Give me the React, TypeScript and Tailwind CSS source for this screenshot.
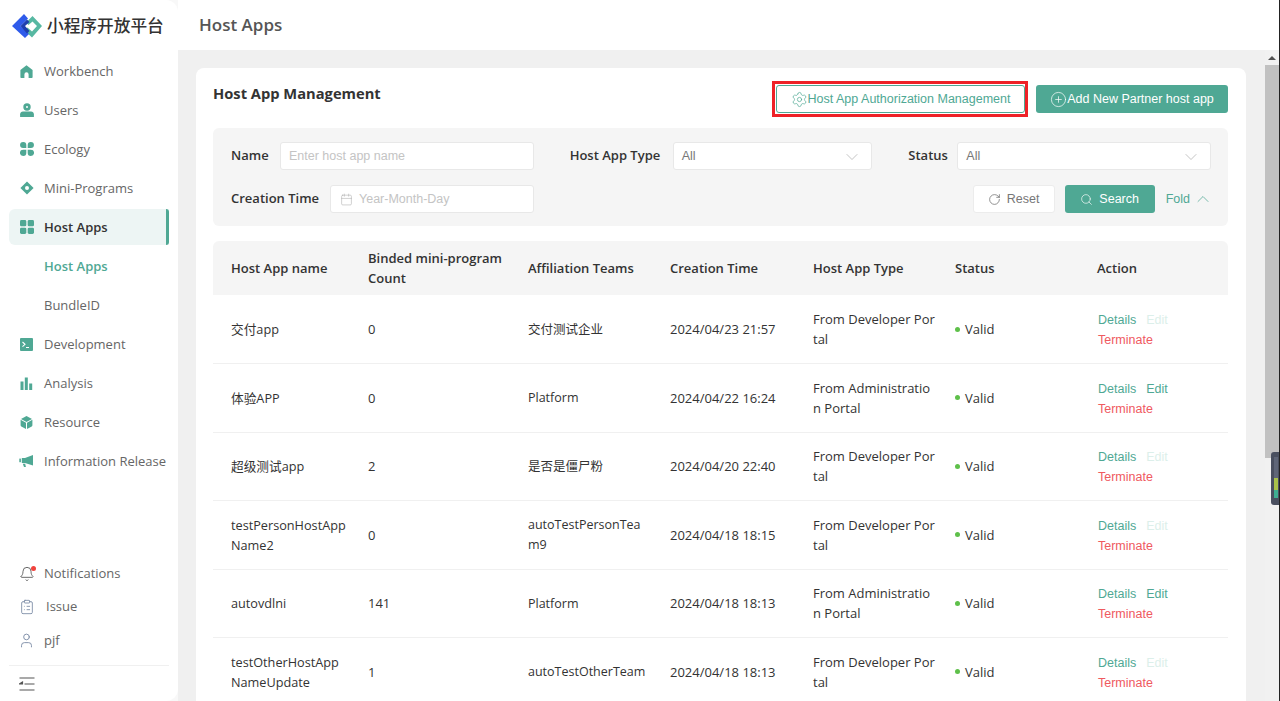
import { Bell, Calendar, ChevronDown, ChevronUp, CirclePlus, ClipboardList, RotateCw, Search, Settings, User } from "lucide-react";
import type { ReactNode } from "react";

const TEAL = "#4fa894";

function HomeIcon() {
  return (
    <svg width="13" height="13" viewBox="0 0 13 13" fill={TEAL}>
      <path d="M6.5 0.3 12.6 5v7c0 .6-.4 1-1 1H8.6V9.4a2 2 0 0 0-4.2 0V13H1.4c-.6 0-1-.4-1-1V5z" />
    </svg>
  );
}

function UserIcon() {
  return (
    <svg width="14" height="14" viewBox="0 0 14 14" fill={TEAL}>
      <circle cx="7" cy="4" r="3.7" />
      <circle cx="7" cy="3.9" r="1" fill="#fff" />
      <path d="M3 8.4h8c1.7 0 2.9 1.2 2.9 2.8V14H.1v-2.8C.1 9.6 1.3 8.4 3 8.4z" />
    </svg>
  );
}

function EcologyIcon() {
  return (
    <svg width="14" height="14" viewBox="0 0 14 14" fill={TEAL}>
      <path d="M3.1 0h.2a3 3 0 0 1 3 3v3.1H3.1a3.05 3.05 0 1 1 0-6.1z" />
      <path d="M10.9 0h-.2a3 3 0 0 0-3 3v3.1h3.2a3.05 3.05 0 1 0 0-6.1z" />
      <path d="M3.1 14h.2a3 3 0 0 0 3-3V7.700H3.100a3.150 3.150 0 1 0 0 6.300z" />
      <path d="M10.9 14h-.2a3 3 0 0 1-3-3V7.700h3.200a3.150 3.150 0 1 1 0 6.300z" />
    </svg>
  );
}

function DiamondIcon() {
  return (
    <svg width="14" height="14" viewBox="0 0 14 14" fill={TEAL}>
      <path fillRule="evenodd" d="M7 .4 13.6 7 7 13.6.4 7zM7 5a2 2 0 1 0 0 4 2 2 0 0 0 0-4z" />
    </svg>
  );
}

function GridIcon() {
  return (
    <svg width="14" height="14" viewBox="0 0 14 14" fill={TEAL}>
      <rect x="0" y="0" width="6.3" height="6.3" rx="1.4" />
      <rect x="7.7" y="0" width="6.3" height="6.3" rx="1.4" />
      <rect x="0" y="7.7" width="6.3" height="6.3" rx="1.4" />
      <rect x="7.7" y="7.7" width="6.3" height="6.3" rx="1.4" />
    </svg>
  );
}

function TerminalIcon() {
  return (
    <svg width="13" height="13" viewBox="0 0 13 13">
      <rect width="13" height="13" rx="1" fill={TEAL} />
      <path d="M2.5 4 5 6.3 2.5 8.6M6 9.5h3" stroke="#fff" strokeWidth="1.1" fill="none" />
    </svg>
  );
}

function BarsIcon() {
  return (
    <svg width="13" height="13" viewBox="0 0 13 13" fill={TEAL}>
      <rect x="0.5" y="4.5" width="3" height="8.5" />
      <rect x="4.8" y="0.5" width="3" height="12.5" />
      <rect x="9.2" y="6.5" width="3" height="6.5" />
    </svg>
  );
}

function CubeIcon() {
  return (
    <svg width="13" height="13" viewBox="0 0 13 13" fill={TEAL}>
      <path d="M6.5 0 12 3 6.5 6 1 3z" />
      <path d="M.6 3.8 6 6.8V13L1.3 10.4C.9 10.2.6 9.8.6 9.3z" />
      <path d="M12.4 3.8 7 6.8V13l4.700-2.600c.4-.2.7-.6.7-1.100z" />
    </svg>
  );
}

function MegaphoneIcon() {
  return (
    <svg width="15" height="14" viewBox="0 0 15 14" fill={TEAL}>
      <path d="M14 1v10.5L6 9H2.8V4H6z" />
      <rect x="0.3" y="4.6" width="1.6" height="3.6" />
      <path d="M3.8 9.8h2.4l.7 3.2H5z" />
    </svg>
  );
}

function Logo() {
  return (
    <svg width="30" height="24" viewBox="0 0 30 24">
      <path d="M20.5 2 30 12 20 23.5 12.5 16.5 15.5 13.5 20 17.5 25 12 20.5 7.5 16.5 11 14 8.5z" fill="#57b8a2" />
      <path d="M12 0 0 12 13 24 17 20 8.5 12 16 4.5z" fill="#2f5bea" />
      <path d="M15 5.500 8.500 12 15 19.500 17.500 17 13 12 17.500 8z" fill="#1e3fae" />
    </svg>
  );
}

const navItems: { label: string; icon?: ReactNode; active?: boolean; sub?: boolean; selected?: boolean }[] = [
  { label: "Workbench", icon: <HomeIcon /> },
  { label: "Users", icon: <UserIcon /> },
  { label: "Ecology", icon: <EcologyIcon /> },
  { label: "Mini-Programs", icon: <DiamondIcon /> },
  { label: "Host Apps", icon: <GridIcon />, active: true },
  { label: "Host Apps", sub: true, selected: true },
  { label: "BundleID", sub: true },
  { label: "Development", icon: <TerminalIcon /> },
  { label: "Analysis", icon: <BarsIcon /> },
  { label: "Resource", icon: <CubeIcon /> },
  { label: "Information Release", icon: <MegaphoneIcon /> },
];

const rows = [
  { name: "交付app", count: "0", team: "交付测试企业", time: "2024/04/23 21:57", type: "From Developer Por\ntal", edit: false },
  { name: "体验APP", count: "0", team: "Platform", time: "2024/04/22 16:24", type: "From Administratio\nn Portal", edit: true },
  { name: "超级测试app", count: "2", team: "是否是僵尸粉", time: "2024/04/20 22:40", type: "From Developer Por\ntal", edit: false },
  { name: "testPersonHostApp\nName2", count: "0", team: "autoTestPersonTea\nm9", time: "2024/04/18 18:15", type: "From Developer Por\ntal", edit: false },
  { name: "autovdlni", count: "141", team: "Platform", time: "2024/04/18 18:13", type: "From Administratio\nn Portal", edit: true },
  { name: "testOtherHostApp\nNameUpdate", count: "1", team: "autoTestOtherTeam", time: "2024/04/18 18:13", type: "From Developer Por\ntal", edit: false },
];

function Sidebar() {
  return (
    <aside className="z-10 flex h-full w-[178px] shrink-0 flex-col rounded-r-xl bg-white text-[13px] whitespace-nowrap text-[#666]">
      <div className="mb-[2px] flex h-[51px] shrink-0 items-center pl-3">
        <Logo />
        <span className="ml-[5px] text-[16.7px] font-medium text-[#333]">小程序开放平台</span>
      </div>
      <nav className="flex flex-col gap-[3px]">
        {navItems.map((item, i) => (
          <div
            key={i}
            className={`relative mx-[9px] flex h-9 items-center rounded-l-md ${item.active ? "bg-[#edf5f4] font-semibold text-[#333]" : ""} ${item.selected ? "font-semibold text-[#4fa894]" : ""}`}
          >
            <span className="flex w-[35px] justify-center">{item.icon}</span>
            <span className="pt-[2px]">{item.label}</span>
            {item.active && <span className="absolute top-0 right-0 h-full w-[3px] rounded-r-sm bg-[#4fa894]" />}
          </div>
        ))}
      </nav>
      <div className="mt-auto flex flex-col">
        <div className="mx-[9px] flex h-[33px] items-center">
          <span className="relative flex w-[35px] justify-center">
            <Bell size={16} strokeWidth={1.3} color="#555" />
            <span className="absolute top-0 right-[8px] h-[5px] w-[5px] rounded-full bg-[#f0433d]" />
          </span>
          Notifications
        </div>
        <div className="mx-[9px] flex h-[33px] items-center">
          <span className="flex w-[37px] justify-center pr-[2px]">
            <ClipboardList size={16} strokeWidth={1.3} color="#7a8aa5" />
          </span>
          Issue
        </div>
        <div className="mx-[9px] flex h-[34px] items-center">
          <span className="flex w-[35px] justify-center">
            <User size={17} strokeWidth={1.3} color="#7a8aa5" />
          </span>
          <span className="pt-[2px]">pjf</span>
        </div>
        <div className="mx-[9px] mt-[8px] flex h-[36px] items-center border-t border-[#f0f0f0] pl-[10px]">
          <svg width="16" height="14" viewBox="0 0 16 14" stroke="#555" strokeWidth="1.2" fill="none">
            <path d="M0.5 1h15M5.5 7h10M0.5 13h15" />
            <path d="M3.5 5 .5 7l3 0z" fill="#555" />
          </svg>
        </div>
      </div>
    </aside>
  );
}

function Filters() {
  const label = "mr-[11px] shrink-0 text-[13px] font-semibold whitespace-nowrap text-[#333]";
  const box = "flex h-7 min-w-0 flex-1 items-center rounded-[3px] border border-[#e8e8e8] bg-white px-[8px] pt-px font-['Liberation_Sans'] text-[12.5px]";
  return (
    <div className="mt-[15px] grid h-[98px] grid-cols-3 content-start gap-x-9 gap-y-[15px] rounded-md bg-[#f5f5f5] pt-[14px] pr-[17px] pl-[18px]">
      <div className="flex items-center">
        <span className={`${label} w-[38px]`}>Name</span>
        <div className={`${box} text-[#c4c4c4]`}>Enter host app name</div>
      </div>
      <div className="flex items-center">
        <span className={`${label} w-[92px]`}>Host App Type</span>
        <div className={`${box} justify-between pr-[9px] text-[#777]`}>
          All
          <ChevronDown size={20} strokeWidth={0.7} color="#999" />
        </div>
      </div>
      <div className="flex items-center">
        <span className={`${label} w-[38px]`}>Status</span>
        <div className={`${box} justify-between pr-[9px] text-[#777]`}>
          All
          <ChevronDown size={20} strokeWidth={0.7} color="#999" />
        </div>
      </div>
      <div className="flex items-center">
        <span className={`${label} w-[88px]`}>Creation Time</span>
        <div className={`${box} pl-[9px] text-[#c4c4c4]`}>
          <Calendar size={13} strokeWidth={1} color="#aaa" className="mr-[6px]" />
          Year-Month-Day
        </div>
      </div>
      <div />
      <div className="-mr-[2px] flex items-center justify-end font-['Liberation_Sans'] text-[12.5px]">
        <button className="flex h-7 w-[82px] items-center justify-center gap-[6px] rounded-[3px] border border-[#ececec] bg-white text-[#777]">
          <RotateCw size={13} strokeWidth={1.3} color="#666" />
          Reset
        </button>
        <button className="ml-[10px] flex h-7 w-[90px] items-center justify-center gap-[6px] rounded-[3px] bg-[#4fa894] text-white">
          <Search size={13} strokeWidth={1.2} />
          Search
        </button>
        <span className="ml-[11px] flex items-center gap-[3px] text-[#4fa894]">
          Fold
          <ChevronUp size={20} strokeWidth={0.9} />
        </span>
      </div>
    </div>
  );
}

function HostTable() {
  const th = "px-[18px] py-0 pr-0 text-left text-[13px] leading-5 font-semibold text-[#333]";
  const td = "h-[68.5px] border-b border-[#f0f0f0] pl-[18px] py-0 whitespace-pre-line";
  return (
    <table className="mt-[15px] w-full table-fixed border-collapse text-[13px] leading-5 text-[#333]">
      <thead>
        <tr className="h-[54px] bg-[#f5f5f5]">
          <th className={`${th} w-[137px] rounded-tl-md`}>Host App name</th>
          <th className={`${th} w-[160px]`}>Binded mini-program Count</th>
          <th className={`${th} w-[142px]`}>Affiliation Teams</th>
          <th className={`${th} w-[143px]`}>Creation Time</th>
          <th className={`${th} w-[142px]`}>Host App Type</th>
          <th className={`${th} w-[142px]`}>Status</th>
          <th className={`${th} rounded-tr-md`}>Action</th>
        </tr>
      </thead>
      <tbody>
        {rows.map((r) => (
          <tr key={r.time + r.name}>
            <td className={`${td} text-[12.7px]`}>{r.name}</td>
            <td className={td}>{r.count}</td>
            <td className={`${td} pt-px text-[12.5px]`}>{r.team}</td>
            <td className={td}>{r.time}</td>
            <td className={td}>{r.type}</td>
            <td className={td}>
              <span className="flex items-center gap-[5px]">
                <span className="h-[5px] w-[5px] rounded-full bg-[#5ec04a]" />
                Valid
              </span>
            </td>
            <td className={`${td} pt-[2px] font-['Liberation_Sans'] text-[12.5px]`}>
              <div className="ml-px flex gap-[10px]">
                <span className="text-[#4fa894]">Details</span>
                <span className={r.edit ? "text-[#4fa894]" : "text-[#dcefea]"}>Edit</span>
              </div>
              <div className="ml-px text-[#ef5a5f]">Terminate</div>
            </td>
          </tr>
        ))}
      </tbody>
    </table>
  );
}

export default function App() {
  return (
    <div className="relative flex h-screen w-full overflow-hidden border-r border-[#222] bg-[#f8f8f8] font-['Open_Sans','Noto_Sans_CJK_SC',sans-serif]">
      <Sidebar />
      <div className="flex min-w-0 flex-1 flex-col">
        <header className="flex h-[50px] shrink-0 items-center bg-white pl-[21px] text-[17px] font-semibold text-[#555]">
          Host Apps
        </header>
        <div className="flex min-h-0 flex-1">
          <main className="min-w-0 flex-1 overflow-hidden bg-[#f0f0f0] pt-[18px] pr-[19px] pl-[18px]">
            <section className="rounded-t-lg bg-white pt-[17px] pr-[18px] pl-[17px]">
              <div className="flex h-7 items-start">
                <h1 className="mt-[-3px] text-[14.7px] font-bold text-[#333]">Host App Management</h1>
                <div className="ml-auto flex gap-[11px] font-['Liberation_Sans'] text-[12.5px]">
                  <button className="relative flex h-7 w-[249px] items-center justify-center rounded-[3px] border border-[#4fa894] bg-white pt-px text-[#4fa894]">
                    <span className="absolute -top-[5px] -right-[4px] -bottom-[5px] -left-[5px] border-[3px] border-[#ee2228]" />
                    <Settings size={17} strokeWidth={1} />
                    Host App Authorization Management
                  </button>
                  <button className="flex h-7 w-[192px] items-center justify-center rounded-[3px] bg-[#4fa894] pt-px text-white">
                    <CirclePlus size={17} strokeWidth={1} />
                    Add New Partner host app
                  </button>
                </div>
              </div>
              <Filters />
              <HostTable />
            </section>
          </main>
          <div className="flex w-[14px] shrink-0 flex-col bg-[#f1f1f1]">
            <div className="flex h-[15px] items-center justify-center">
              <span className="h-0 w-0 border-x-[4px] border-b-[4px] border-x-transparent border-b-[#505050]" />
            </div>
            <div className="h-[393px] bg-[#c1c1c1]" />
          </div>
        </div>
      </div>
      <svg className="absolute top-[452px] right-0" width="8" height="53" viewBox="0 0 8 53">
        <rect x="0" y="0" width="12" height="53" rx="3" fill="#4a5060" />
        <rect x="3" y="5" width="4" height="21" fill="#5f6678" />
        <rect x="3" y="26" width="4" height="12" fill="#a9c24a" />
        <rect x="3" y="38" width="4" height="8" fill="#3fae92" />
      </svg>
    </div>
  );
}
